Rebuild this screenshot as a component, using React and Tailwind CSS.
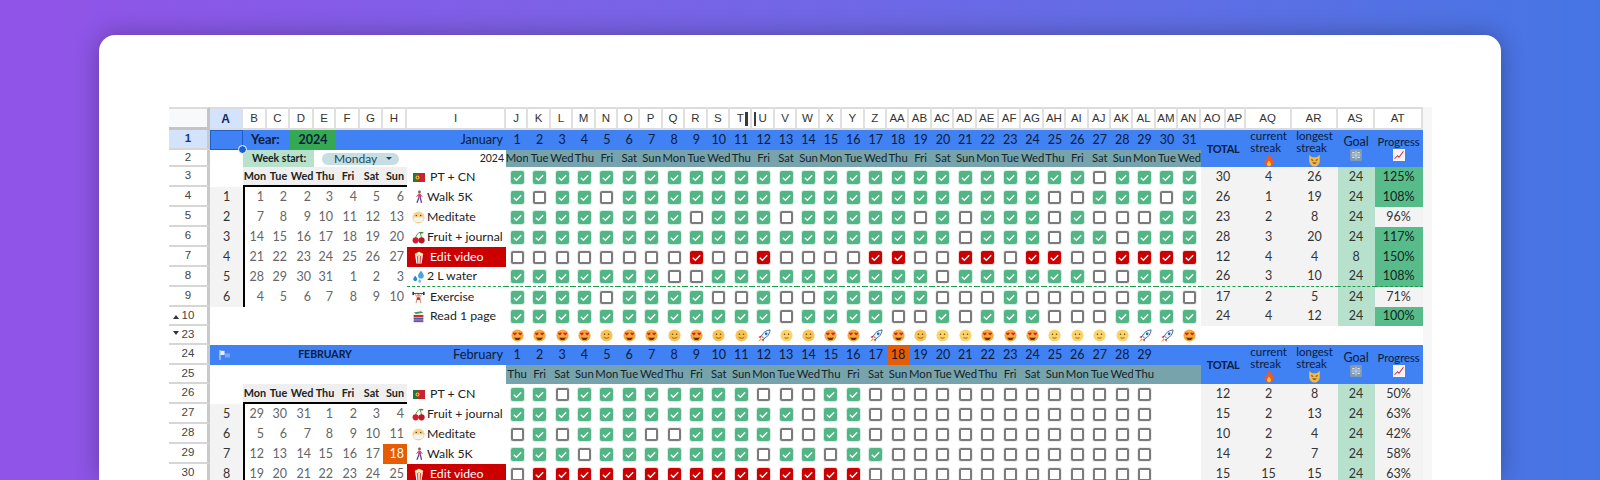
import React from 'react';

const GRID =
  'grid grid-cols-[41px_33px_24px_23px_24px_22px_24px_23px_24px_99px_repeat(31,22.42px)_25px_20px_46px_46px_37px_48px_9px] grid-rows-[23px_20px_17px_20px_20px_20px_20px_20px_20px_20px_19px_19px_20px_19px_20px_20px_20px_20px_20px]';
const ARIAL = "font-[family-name:'Liberation_Sans',Arial,sans-serif]";
const BODY = 'font-[family-name:Lato,sans-serif]';
const DOW = ['Mon', 'Tue', 'Wed', 'Thu', 'Fri', 'Sat', 'Sun'];
const COL_NAMES = ['A', 'B', 'C', 'D', 'E', 'F', 'G', 'H', 'I', 'J', 'K', 'L', 'M', 'N', 'O', 'P', 'Q', 'R', 'S', 'T', 'U', 'V', 'W', 'X', 'Y', 'Z', 'AA', 'AB', 'AC', 'AD', 'AE', 'AF', 'AG', 'AH', 'AI', 'AJ', 'AK', 'AL', 'AM', 'AN', 'AO', 'AP', 'AQ', 'AR', 'AS', 'AT'];
const DIVIDER = 'border-b border-dashed border-b-[#1a9e4b]';

const range = (a, b) => Array.from({ length: b - a + 1 }, (_, i) => a + i);
const allBut = (n, off) => range(1, n).filter((d) => !off.includes(d));

const janHabits = [
  { row: 3, icon: 'flag', name: 'PT + CN', wide: true, on: allBut(31, [27]), stats: [30, 4, 26, 24, 125] },
  { row: 4, icon: 'walk', name: 'Walk 5K', on: allBut(31, [2, 5, 25, 26, 30]), stats: [26, 1, 19, 24, 108], week: 1, dates: [1, 2, 2, 3, 4, 5, 6] },
  { row: 5, icon: 'mask', name: 'Meditate', on: allBut(31, [9, 13, 19, 21, 25, 27, 28, 29]), stats: [23, 2, 8, 24, 96], week: 2, dates: range(7, 13) },
  { row: 6, icon: 'cherry', name: 'Fruit + journal', on: allBut(31, [21, 25, 28]), stats: [28, 3, 20, 24, 117], week: 3, dates: range(14, 20) },
  { row: 7, icon: 'popcorn', name: 'Edit video', wide: true, red: true, on: [9, 12, 17, 18, 21, 22, 24, 25, 28, 29, 30, 31], stats: [12, 4, 4, 8, 150], week: 4, dates: range(21, 27) },
  { row: 8, icon: 'drops', name: '2 L water', divider: true, on: allBut(31, [8, 9, 20, 27, 28]), stats: [26, 3, 10, 24, 108], week: 5, dates: [28, 29, 30, 31, 1, 2, 3] },
  { row: 9, icon: 'lift', name: 'Exercise', wide: true, on: [1, 2, 3, 4, 6, 7, 8, 9, 12, 15, 16, 17, 18, 19, 23, 29, 30], stats: [17, 2, 5, 24, 71], week: 6, dates: [4, 5, 6, 7, 8, 9, 10] },
  { row: 10, icon: 'books', name: 'Read 1 page', wide: true, on: [...range(1, 12), 14, 15, 16, 17, 20, 22, 23, 24, 28, 29, 30, 31], stats: [24, 4, 12, 24, 100], arrow: 'up' },
];

const febHabits = [
  { row: 26, icon: 'flag', name: 'PT + CN', wide: true, on: [1, 2, ...range(4, 11), 15, 16], stats: [12, 2, 8, 24, 50] },
  { row: 27, icon: 'cherry', name: 'Fruit + journal', on: [...range(1, 13), 15, 16], stats: [15, 2, 13, 24, 63], week: 5, dates: [29, 30, 31, 1, 2, 3, 4] },
  { row: 28, icon: 'mask', name: 'Meditate', on: [2, 4, 5, 6, 9, 10, 11, 12, 15, 16], stats: [10, 2, 4, 24, 42], week: 6, dates: range(5, 11) },
  { row: 29, icon: 'walk', name: 'Walk 5K', on: [1, 2, 3, ...range(5, 11), 13, 14, 16, 17], stats: [14, 2, 7, 24, 58], week: 7, dates: range(12, 18), today: 18 },
  { row: 30, icon: 'popcorn', name: 'Edit video', wide: true, red: true, on: range(2, 16), stats: [15, 15, 15, 24, 63], week: 8, dates: range(19, 25) },
];

const moods = ['h', 'h', 'h', 'h', 's', 'h', 'h', 's', 'h', 's', 's', 'r', 'n', 's', 'h', 'h', 'r', 'h', 's', 'n', 'n', 'h', 'h', 'h', 'n', 'n', 'n', 'n', 'r', 'r', 'h'];

function Icon({ name }) {
  if (name === 'flag') return (
    <svg viewBox="0 0 16 12" className="w-[12px] h-[9px] shrink-0">
      <rect width="16" height="12" fill="#c8242f" /><rect width="6" height="12" fill="#1f7a3a" /><circle cx="6" cy="6" r="2.6" fill="#f4c430" /><circle cx="6" cy="6" r="1.3" fill="#c8242f" />
    </svg>
  );
  if (name === 'walk') return (
    <svg viewBox="0 0 12 16" className="w-[10px] h-[14px] shrink-0">
      <circle cx="6.5" cy="2" r="1.7" fill="#8a5a44" /><path d="M5 4h3l.5 4.5H5z" fill="#d63384" /><path d="M6 8.5 3.5 15M7.5 8.5 9 15" stroke="#5b3a8c" strokeWidth="1.5" fill="none" /><path d="M5 5 3 8M8 5l2 3" stroke="#8a5a44" strokeWidth="1" />
    </svg>
  );
  if (name === 'mask') return (
    <svg viewBox="0 0 16 16" className="w-[13px] h-[13px] shrink-0">
      <circle cx="8" cy="8" r="7.5" fill="#f4d58d" /><path d="M2 8h12v2.5a3 3 0 0 1-3 3H5a3 3 0 0 1-3-3z" fill="#f3f3f3" /><circle cx="5.3" cy="5.6" r="1" fill="#6b4a1f" /><circle cx="10.7" cy="5.6" r="1" fill="#6b4a1f" />
    </svg>
  );
  if (name === 'cherry') return (
    <svg viewBox="0 0 16 16" className="w-[13px] h-[13px] shrink-0">
      <path d="M4.5 9C5 5 7 3 10 1.5c.5 3 1.5 5 2 7.5" stroke="#4c8a2b" strokeWidth="1.1" fill="none" /><path d="M9 2c2-1.5 4-1 5.500 0-2 1.500-4 1.500-5.500 0z" fill="#4c8a2b" /><circle cx="4.500" cy="11.500" r="3.800" fill="#cf1f2e" /><circle cx="11.800" cy="11.500" r="3.800" fill="#b81726" />
    </svg>
  );
  if (name === 'popcorn') return (
    <svg viewBox="0 0 16 16" className="w-[12px] h-[13px] shrink-0">
      <circle cx="5" cy="4" r="2.500" fill="#fbe6a8" /><circle cx="8" cy="3" r="2.700" fill="#fff2c6" /><circle cx="11" cy="4" r="2.500" fill="#fbe6a8" /><path d="M3 6h10l-1.500 10h-7z" fill="#fff" /><path d="M5 6h2l.3 10H5.800zM9 6h2l-.8 10H8.700z" fill="#e2574c" />
    </svg>
  );
  if (name === 'drops') return (
    <svg viewBox="0 0 16 16" className="w-[13px] h-[13px] shrink-0">
      <path d="M11 1c2.500 3 3.500 4.500 3.500 6a3.500 3.500 0 0 1-7 0C7.500 5.500 8.500 4 11 1z" fill="#4aa3df" /><path d="M4 7c1.500 2 2.500 3 2.500 4.200a2.500 2.500 0 0 1-5 0C1.500 10 2.500 9 4 7z" fill="#2f86c9" /><path d="M9.500 11c1 1.300 1.800 2 1.800 2.800a1.800 1.800 0 0 1-3.600 0c0-.8.800-1.500 1.800-2.800z" fill="#6dbbe8" />
    </svg>
  );
  if (name === 'lift') return (
    <svg viewBox="0 0 16 16" className="w-[13px] h-[13px] shrink-0">
      <path d="M1 3h14" stroke="#444" strokeWidth="1.200" /><rect x="0.500" y="1" width="2" height="4" fill="#333" /><rect x="13.500" y="1" width="2" height="4" fill="#333" /><path d="M4 3.500 6.500 8h3L12 3.500" stroke="#c9967a" strokeWidth="1.200" fill="none" /><circle cx="8" cy="5.500" r="1.700" fill="#c9967a" /><path d="M6 8h4l.5 3h-5z" fill="#d7263d" /><path d="M6 11l-1 4M10 11l1 4" stroke="#c9967a" strokeWidth="1.300" />
    </svg>
  );
  if (name === 'books') return (
    <svg viewBox="0 0 16 16" className="w-[13px] h-[13px] shrink-0">
      <path d="M2 3l9-1.500 3 2-9 1.500z" fill="#3f9a4b" /><rect x="2" y="6" width="12" height="3" fill="#c8302f" /><rect x="2" y="9.500" width="12" height="2.500" fill="#3a5fae" /><rect x="2" y="12.500" width="12" height="2.500" fill="#7d4c9f" />
    </svg>
  );
  return null;
}

function Fire() {
  return (
    <svg viewBox="0 0 12 16" className="w-[10px] h-[13px]">
      <path d="M6 0c.5 3 5.500 5 5.500 10a5.500 5.500 0 0 1-11 0c0-2 1-3.500 2-4.500 0 1.500.5 2 1.200 2.300C3.500 5 4.500 2.500 6 0z" fill="#ee5a24" /><path d="M6 8c.5 1.500 2.500 2.500 2.500 4.500a2.500 2.500 0 0 1-5 0C3.500 11 5 10 6 8z" fill="#fbc531" />
    </svg>
  );
}

function Cat() {
  return (
    <svg viewBox="0 0 16 16" className="w-[13px] h-[13px]">
      <path d="M1.500 1 5 4h6l3.500-3v8a6.500 6.500 0 0 1-13 0z" fill="#f5b942" /><path d="M4 7l2.500.8M12 7l-2.500.8" stroke="#5b3a10" strokeWidth="1.200" /><path d="M5 10.500c1.500 2 4.500 2 6 0z" fill="#5b3a10" />
    </svg>
  );
}

function Abacus() {
  return (
    <svg viewBox="0 0 16 16" className="w-[12px] h-[12px]">
      <rect width="16" height="16" rx="2" fill="#7f9ab5" /><path d="M8 2v12M2 8h12" stroke="#dfe7ef" strokeWidth="1" /><path d="M3 5h3M10 5h3M3 11h3M10 11h3" stroke="#fff" strokeWidth="1.400" />
    </svg>
  );
}

function Chart() {
  return (
    <svg viewBox="0 0 16 16" className="w-[12px] h-[12px]">
      <rect width="16" height="16" fill="#f4f4f4" /><path d="M2 13 6 9l2 2 6-8" stroke="#d7263d" strokeWidth="1.400" fill="none" />
    </svg>
  );
}

function Mood({ kind }) {
  if (kind === 'r') return (
    <svg viewBox="0 0 16 16" className="w-[14px] h-[14px]">
      <path d="M4 10.500 1 15l4.500-3z" fill="#f79f1f" /><path d="M5 7.500 1.500 9l2.500 1.500zM8.500 11 7 14.500l-1.500-2.500z" fill="#d7263d" /><path d="M15 1c-5 .5-8 3-10 7l3 3c4-2 6.500-5 7-10z" fill="#eef2f7" stroke="#2f5a9e" strokeWidth="1" /><circle cx="10.500" cy="5.500" r="1.500" fill="#1f63b5" />
    </svg>
  );
  const face = kind === 'h' ? '#f6a93b' : kind === 's' ? '#f8c351' : '#fbd469';
  return (
    <svg viewBox="0 0 16 16" className="w-[13px] h-[13px]">
      <circle cx="8" cy="8" r="7.500" fill={face} />
      {kind === 'h' ? (
        <g>
          <path d="M4.700 8 2.600 5.800c-.8-1.200 1.400-2.400 2.100-.9.700-1.500 2.900-.3 2.100.9z" fill="#d6202c" />
          <path d="M11.300 8 9.200 5.800c-.8-1.200 1.400-2.400 2.100-.9.700-1.500 2.900-.3 2.100.9z" fill="#d6202c" />
          <path d="M4 10c2 1 6 1 8 0-.5 2.500-2 3.500-4 3.500S4.500 12.500 4 10z" fill="#6b2d10" />
        </g>
      ) : (
        <g>
          <circle cx="5.500" cy="6.500" r="1" fill="#6b4210" />
          <circle cx="10.500" cy="6.500" r="1" fill="#6b4210" />
          <path d={kind === 's' ? 'M4.500 10c1.500 1.800 5.500 1.800 7 0' : 'M5.500 10.800c1.500.6 3.500.6 5 0'} stroke="#6b4210" strokeWidth=".9" fill="none" />
        </g>
      )}
    </svg>
  );
}

function Check({ on, red }) {
  if (!on) return <div className="w-[13px] h-[13px] rounded-[2px] border-2 border-[#7b7b7b] bg-white shadow-[0_0_0_1px_#eeeeee]" />;
  return (
    <div className={`w-[13px] h-[13px] rounded-[2px] flex items-center justify-center ${red ? 'bg-[#cc0000] shadow-[0_0_0_1px_#f5d9d9]' : 'bg-[#52b586] shadow-[0_0_0_1px_#d5eee1]'}`}>
      <svg viewBox="0 0 14 14" className="w-[13px] h-[13px]">
        <path d="M3 7.300 5.800 10 11 4.500" stroke="#fff" strokeWidth="1.400" fill="none" />
      </svg>
    </div>
  );
}

function RowNo({ n, arrow, highlight }) {
  return (
    <div className={`relative flex items-center justify-center text-[11.500px] border-b-2 border-r-[3px] border-b-[#d6d6d6] border-r-[#c9c9c9] ${ARIAL} ${highlight ? 'bg-[#d3e3fd] font-bold text-[#0b3a82]' : 'text-[#444]'}`}>
      {arrow === 'up' && <span className="absolute left-[4px] bottom-[5px] w-0 h-0 border-x-[3px] border-x-transparent border-b-[4px] border-b-[#333]" />}
      {arrow === 'down' && <span className="absolute left-[4px] top-[5px] w-0 h-0 border-x-[3px] border-x-transparent border-t-[4px] border-t-[#333]" />}
      {n}
    </div>
  );
}

function ColumnHeaders() {
  return (
    <>
      <div className="bg-[#f8f9fa] border-t-2 border-r-[3px] border-b-[3px] border-t-[#dcdcdc] border-r-[#c4c4c4] border-b-[#c4c4c4]" />
      {COL_NAMES.map((c, i) => (
        <div
          key={c}
          className={`relative flex items-center justify-center border-t-2 border-b-2 border-r-2 border-t-[#dcdcdc] border-b-[#dcdcdc] border-r-[#e0e0e0] ${ARIAL} ${i === 0 ? 'bg-[#d3e3fd] font-bold text-[#0b2a66] text-[12px]' : 'bg-white text-[#333] text-[11.500px]'}`}
        >
          {c}
          {c === 'T' && (
            <>
              <span className="absolute right-[2px] top-[3px] h-[14px] w-[3px] bg-[#3a3a3a]" />
              <span className="absolute right-[-6px] top-[3px] h-[14px] w-[2px] bg-[#3a3a3a] z-10" />
            </>
          )}
        </div>
      ))}
      <div className="bg-[#f7f7f7]" />
    </>
  );
}

function BlueHeaderCols() {
  const head = 'row-span-2 bg-[#4081f3] flex flex-col items-center justify-center leading-[12px] text-[#0a1c3d]';
  return (
    <>
      <div className={`col-span-2 font-bold text-[11px] tracking-[-0.3px] ${head}`}>TOTAL</div>
      <div className={`text-[11.500px] ${head}`}>current<br />streak<Fire /></div>
      <div className={`text-[11.500px] ${head}`}>longest<br />streak<Cat /></div>
      <div className={`gap-[1px] text-[12.500px] ${head}`}>Goal<Abacus /></div>
      <div className={`gap-[1px] text-[11.200px] ${head}`}>Progress<Chart /></div>
    </>
  );
}

function DayNumbers({ count, today }) {
  return range(1, 31).map((d) => (
    <div key={d} className={`flex items-center justify-center text-[12.500px] text-[#0a1c3d] ${d === today ? 'bg-[#e65c00]' : 'bg-[#4081f3]'}`}>
      {d <= count ? d : ''}
    </div>
  ));
}

function Weekdays({ count, start }) {
  return range(1, 31).map((d) => (
    <div key={d} className="flex items-center justify-center whitespace-nowrap bg-[#77a3ac] text-[11.300px] text-[#14242a]">
      {d <= count ? DOW[(d - 1 + start) % 7] : ''}
    </div>
  ));
}

function CalendarHead({ row, habit, count }) {
  return (
    <>
      <RowNo n={row} />
      <div />
      {DOW.map((d) => (
        <div key={d} className="flex items-center justify-center bg-[#efefef] border-b-2 border-b-black text-[10.800px] font-bold text-[#222]">{d}</div>
      ))}
      <HabitCells habit={habit} count={count} />
    </>
  );
}

function HabitCells({ habit, count = 31 }) {
  const { icon, name, wide, red, on, stats, divider } = habit;
  const [total, current, longest, goal, progress] = stats;
  const line = divider ? DIVIDER : '';
  const stat = `flex items-center justify-center bg-[#f3f3f3] text-[12.500px] text-[#333] ${line}`;
  return (
    <>
      <div className={`flex items-center pl-[5px] whitespace-nowrap text-[12.300px] ${red ? 'bg-[#cc0000] text-white' : 'text-[#222]'} ${line}`}>
        <div className="w-[13px] flex justify-center"><Icon name={icon} /></div>
        <span className={wide ? 'ml-[5px]' : 'ml-[2px]'}>{name}</span>
      </div>
      {range(1, 31).map((d) => (
        <div key={d} className={`flex items-center justify-center ${line}`}>
          {d <= count && <Check on={on.includes(d)} red={red} />}
        </div>
      ))}
      <div className={`col-span-2 ${stat}`}>{total}</div>
      <div className={stat}>{current}</div>
      <div className={stat}>{longest}</div>
      <div className={`flex items-center justify-center bg-[#b7e1cd] text-[12.500px] text-[#333] ${line}`}>{goal}</div>
      <div className={`flex items-center justify-center text-[12.500px] ${progress >= 100 ? 'bg-[#57bb8a] text-[#10261b]' : 'bg-[#f3f3f3] text-[#333]'} ${line}`}>{progress}%</div>
      <div className="bg-[#f7f7f7]" />
    </>
  );
}

function WeekRow({ habit, count }) {
  return (
    <>
      <RowNo n={habit.row} arrow={habit.arrow} />
      {habit.week ? (
        <>
          <div className="flex items-center justify-center bg-[#f3f3f3] text-[12.500px] text-[#333]">{habit.week}</div>
          {habit.dates.map((d, i) => (
            <div
              key={i}
              className={`flex items-center justify-end pr-[3px] text-[12.500px] ${i === 0 ? 'border-l-2 border-l-black' : ''} ${d === habit.today ? 'bg-[#e65c00] text-white' : 'text-[#666]'}`}
            >
              {d}
            </div>
          ))}
        </>
      ) : (
        <div className="col-span-8" />
      )}
      <HabitCells habit={habit} count={count} />
    </>
  );
}

export default function App() {
  return (
    <div className="h-[480px] overflow-hidden bg-linear-to-r from-[#9153e8] to-[#4575e4] pt-[35px] pl-[99px]">
      <div className={`w-[1402px] h-[445px] overflow-hidden rounded-t-2xl bg-white pt-[72px] pl-[70px] shadow-[0_0_24px_rgba(0,0,0,0.3)] ${BODY}`}>
        <div className={`${GRID} relative`}>
          <ColumnHeaders />

          {/* row 1 */}
          <RowNo n={1} highlight />
          <div className="relative bg-[#4081f3] border border-[#1a5fd0]">
            <span className="absolute right-[-5px] bottom-[-5px] w-[9px] h-[9px] rounded-full bg-[#1a5fd0] border border-white z-10" />
          </div>
          <div className="col-span-2 flex items-center pl-[8px] bg-[#4081f3] font-bold text-[13px] text-[#0a1c3d]">Year:</div>
          <div className="col-span-2 flex items-center justify-center bg-[#34a853] font-bold text-[12.500px] text-[#0a1c3d]">2024</div>
          <div className="col-span-3 bg-[#4081f3]" />
          <div className="flex items-center justify-end pr-[3px] bg-[#4081f3] text-[12.500px] text-[#0a1c3d]">January</div>
          <DayNumbers count={31} />
          <BlueHeaderCols />
          <div className="bg-[#f7f7f7]" />

          {/* row 2 */}
          <RowNo n={2} />
          <div />
          <div className="col-span-3 flex items-center pl-[9px] bg-[#b7e1cd] font-bold text-[10.500px] text-[#14242a]">Week start:</div>
          <div className="col-span-4 flex items-center px-[8px]">
            <div className="flex-1 h-[12px] flex items-center justify-between pl-[12px] pr-[7px] rounded-full bg-[#c6dde3] text-[12px] text-[#164e5e]">
              Monday
              <span className="w-0 h-0 border-x-[3px] border-x-transparent border-t-[3px] border-t-[#164e5e]" />
            </div>
          </div>
          <div className="flex items-center justify-end pr-[2px] text-[10.500px] text-[#222]">2024</div>
          <Weekdays count={31} start={0} />
          <div className="bg-[#f7f7f7]" />

          <CalendarHead row={3} habit={janHabits[0]} />
          {janHabits.slice(1).map((h) => <WeekRow key={h.row} habit={h} />)}

          {/* row 23, moods */}
          <RowNo n={23} arrow="down" />
          <div className="col-span-9" />
          {moods.map((m, i) => (
            <div key={i} className="flex items-center justify-center"><Mood kind={m} /></div>
          ))}
          <div className="col-span-6" />
          <div className="bg-[#f7f7f7]" />

          {/* row 24 */}
          <RowNo n={24} />
          <div className="flex items-center pl-[9px] bg-[#4081f3]">
            <svg viewBox="0 0 14 12" className="w-[12px] h-[10px]">
              <path d="M1 0v12" stroke="#dfe9fb" strokeWidth="1.200" /><path d="M1.500 1h5v5h-5z" fill="#e8effc" /><path d="M7 4h6v5H7z" fill="#7ea6ee" />
            </svg>
          </div>
          <div className="col-span-7 flex items-center justify-center bg-[#4081f3] font-bold text-[10.500px] text-[#0a1c3d]">FEBRUARY</div>
          <div className="flex items-center justify-end pr-[3px] bg-[#4081f3] text-[12.800px] text-[#0a1c3d]">February</div>
          <DayNumbers count={29} today={18} />
          <BlueHeaderCols />
          <div className="bg-[#f7f7f7]" />

          {/* row 25 */}
          <RowNo n={25} />
          <div className="col-span-9" />
          <Weekdays count={29} start={3} />
          <div className="bg-[#f7f7f7]" />

          <CalendarHead row={26} habit={febHabits[0]} count={29} />
          {febHabits.slice(1).map((h) => <WeekRow key={h.row} habit={h} count={29} />)}
        </div>
      </div>
    </div>
  );
}
